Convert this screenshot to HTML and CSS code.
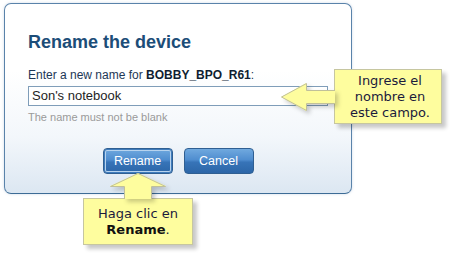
FILE: index.html
```html
<!DOCTYPE html>
<html lang="en">
<head>
<meta charset="utf-8">
<title>Rename the device</title>
<link rel="stylesheet" href="styles.css">
</head>
<body>
<div class="stage">
  <div class="dialog">
    <h1 class="title">Rename the device</h1>
    <div class="label">Enter a new name for <b>BOBBY_BPO_R61</b>:</div>
    <div class="input">Son's notebook</div>
    <div class="hint">The name must not be blank</div>
    <div class="actions">
      <button class="btn btn-focus">Rename</button>
      <button class="btn">Cancel</button>
    </div>
  </div>

  <div class="note note-right">Ingrese el<br>nombre en<br>este campo.</div>
  <svg class="arrow arrow-left" width="56" height="30" viewBox="0 0 56 30">
    <path class="arrow-fill" d="M55 8 H26 V1 L1 15 L26 29 V22 H55 Z"/>
    <path class="arrow-line" d="M55 8.5 H26.5 V1.5 L1.5 15 L26.5 28.5 V21.5 H55"/>
  </svg>

  <div class="note note-bottom">Haga clic en<br><b>Rename</b>.</div>
  <svg class="arrow arrow-up" width="58" height="27" viewBox="0 0 58 27">
    <path class="arrow-fill" d="M15 27 V14 H1 L29 1 L57 14 H43 V27 Z"/>
    <path class="arrow-line" d="M15.5 27 V14.5 H1.5 L29 1.5 L56.5 14.5 H42.5 V27"/>
  </svg>
</div>
</body>
</html>
```

FILE: styles.css
```css
html, body {
  margin: 0;
  padding: 0;
  background: #ffffff;
}

body {
  font-family: "Liberation Sans", Arial, sans-serif;
}

.stage {
  position: relative;
  width: 460px;
  height: 272px;
  overflow: hidden;
  padding-top: 3px;
  box-sizing: border-box;
}

.dialog {
  margin-left: 4px;
  width: 348px;
  box-sizing: border-box;
  border: 1px solid #5a83aa;
  border-bottom-color: #3d6c96;
  border-radius: 7px;
  background: linear-gradient(to bottom, #ffffff 0%, #ffffff 35%, #f3f7fb 70%, #dce7f2 100%);
  box-shadow: 0 0 3px rgba(120, 150, 185, 0.35);
  padding: 27px 0 19px 23px;
}

.title {
  margin: 0;
  font-size: 18px;
  line-height: 22px;
  font-weight: bold;
  color: #1c4d78;
}

.label {
  margin-top: 15px;
  font-size: 12px;
  line-height: 14px;
  color: #1d3756;
}

.label b {
  color: #0f1e32;
}

.input {
  margin-top: 4px;
  width: 300px;
  height: 20px;
  box-sizing: border-box;
  border: 1px solid #7f9db9;
  background: #ffffff;
  padding-left: 3px;
  font-size: 13px;
  line-height: 18px;
  color: #1e1e1e;
}

.hint {
  margin-top: 5px;
  font-size: 11px;
  line-height: 13px;
  color: #9a9a9a;
}

.actions {
  margin-top: 24px;
  margin-left: -23px;
  display: flex;
  justify-content: center;
  gap: 11px;
}

.btn {
  width: 70px;
  height: 26px;
  margin: 0;
  padding: 0;
  border: 1px solid #2f5f92;
  border-radius: 4px;
  background: linear-gradient(to bottom, #70a9df 0%, #4f8dcf 45%, #3774b8 55%, #2c66a8 100%);
  color: #ffffff;
  font-family: "Liberation Sans", Arial, sans-serif;
  font-size: 12.5px;
  line-height: 24px;
  text-align: center;
}

.btn-focus {
  box-shadow: inset 0 0 0 1px #3f7cbc, inset 0 0 0 2px #b7d3ee;
}

.note {
  position: absolute;
  box-sizing: border-box;
  background: #fefd9e;
  border: 1px solid #c6c6a0;
  box-shadow: 4px 4px 4px rgba(0, 0, 0, 0.22);
  font-family: "DejaVu Sans", Verdana, sans-serif;
  font-size: 13px;
  line-height: 16px;
  color: #1b1b3c;
  text-align: center;
}

.note b {
  color: #111111;
}

.note-right {
  left: 334px;
  top: 69px;
  width: 108px;
  height: 55px;
  padding-top: 3px;
  padding-left: 4px;
}

.note-bottom {
  left: 83px;
  top: 198px;
  width: 110px;
  height: 47px;
  padding-top: 7px;
}

.arrow {
  position: absolute;
  overflow: visible;
  filter: drop-shadow(3px 3px 2px rgba(0, 0, 0, 0.2));
}

.arrow-left {
  left: 280px;
  top: 82px;
}

.arrow-up {
  left: 109px;
  top: 172px;
}

.arrow-fill {
  fill: #fefd9e;
}

.arrow-line {
  fill: none;
  stroke: #c0c09a;
  stroke-width: 1;
}
```
